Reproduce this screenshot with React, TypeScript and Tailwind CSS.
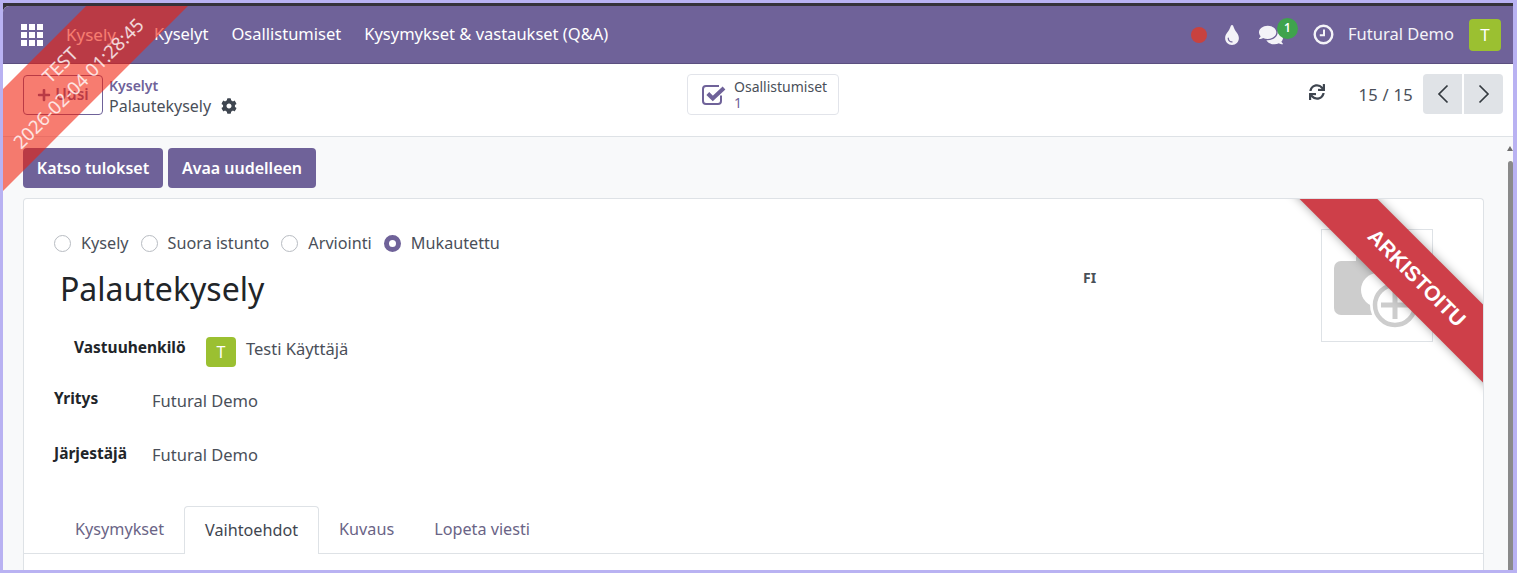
import { FaCog, FaComments, FaPlus, FaSync, FaTint } from 'react-icons/fa';

const navLinks = ['Kyselyt', 'Osallistumiset', 'Kysymykset & vastaukset (Q&A)'];
const radios = [
  { label: 'Kysely', checked: false },
  { label: 'Suora istunto', checked: false },
  { label: 'Arviointi', checked: false },
  { label: 'Mukautettu', checked: true },
];
const tabs = ['Kysymykset', 'Vaihtoehdot', 'Kuvaus', 'Lopeta viesti'];

const AppsIcon = () => (
  <svg width="22" height="22" viewBox="0 0 22 22" fill="white">
    {[0, 8, 16].map((x) =>
      [0, 8, 16].map((y) => <rect key={`${x}-${y}`} x={x} y={y} width="6" height="6" />),
    )}
  </svg>
);

const ClockIcon = () => (
  <svg width="21" height="21" viewBox="0 0 21 21" fill="none" stroke="#f4f3f8">
    <circle cx="10.5" cy="10.5" r="8.8" strokeWidth="2.4" />
    <path d="M11 5.5v5.8H6.8" strokeWidth="2" />
  </svg>
);

const CheckIcon = () => (
  <svg width="24" height="22" viewBox="0 0 24 22" fill="none" stroke="#6f6299">
    <path d="M19 11.5v5.5a3 3 0 0 1-3 3H4a3 3 0 0 1-3-3V5a3 3 0 0 1 3-3h13" strokeWidth="2" />
    <path d="M5.8 9.5l5 5L22 4" strokeWidth="4" />
  </svg>
);

const Chevron = ({ flip }: { flip?: boolean }) => (
  <svg width="12" height="20" viewBox="0 0 12 20" fill="none" stroke="#343a40" strokeWidth="1.7" className={flip ? 'rotate-180' : ''}>
    <path d="M10.5 1.5L2 10l8.5 8.5" />
  </svg>
);

const CameraPlaceholder = () => (
  <svg width="110" height="111" viewBox="0 0 110 111">
    <rect x="12" y="31" width="86" height="54" rx="7" fill="#cdcdcd" />
    <rect x="34" y="24" width="40" height="14" rx="4" fill="#cdcdcd" />
    <circle cx="56" cy="60" r="17" fill="white" />
    <circle cx="73" cy="75" r="25" fill="white" />
    <circle cx="73" cy="75" r="20" fill="none" stroke="#cdcdcd" strokeWidth="4.5" />
    <path d="M73 61v28M59 75h28" stroke="#cdcdcd" strokeWidth="5" />
  </svg>
);

export default function App() {
  return (
    <div className="relative flex h-[573px] w-[1517px] flex-col overflow-hidden border-[3px] border-r-4 border-[#b9b2f2] bg-[#35323a] pt-[3px] font-['Noto_Sans',sans-serif] text-[16.5px] text-[#4a4f59]">
      <div className="relative flex min-h-0 flex-1 flex-col overflow-hidden rounded-tl-[6px] bg-[#f8f9fa]">
        <nav className="flex h-[58px] shrink-0 items-center border-b border-[#5b4f80] bg-[#6f6299] pl-[18px] pr-3 text-white">
          <AppsIcon />
          <span className="ml-[23px] w-[59px] text-[17px] text-white">Kysely</span>
          <div className="ml-[29px] flex gap-[23px]">
            {navLinks.map((link) => (
              <span key={link}>{link}</span>
            ))}
          </div>
          <div className="ml-auto flex items-center">
            <span className="h-4 w-4 rounded-full bg-[#c8423f]" />
            <FaTint className="ml-[15px] text-[20px] text-[#f4f3f8]" />
            <div className="relative ml-[17px]">
              <FaComments className="text-[24px] text-[#f4f3f8]" />
              <span className="absolute -right-[15px] -top-[5px] flex h-[21px] w-[21px] items-center justify-center rounded-full bg-[#3fa34d] text-[12px] font-semibold">1</span>
            </div>
            <div className="ml-[30px]">
              <ClockIcon />
            </div>
            <span className="ml-[14px] text-[#f4f3f8]">Futural Demo</span>
            <span className="ml-[15px] flex h-8 w-8 items-center justify-center rounded-[4px] bg-[#9bc031] text-[17px]">T</span>
          </div>
        </nav>

        <div className="flex h-[73px] shrink-0 items-center border-b border-[#dee2e6] bg-white pb-[11px]">
          <div className="flex w-[684px] items-center pl-5">
            <button className="flex h-10 w-20 items-center justify-center gap-1 rounded-[4px] border border-[#6f6299] text-[15.5px] font-semibold text-[#6f6299]">
              <FaPlus className="text-[14px]" />
              Uusi
            </button>
            <div className="ml-[6px] mt-[2px]">
              <div className="text-sm font-semibold leading-[20px] text-[#6f6299]">Kyselyt</div>
              <div className="flex items-center gap-[10px] text-base leading-[20px]">
                Palautekysely
                <FaCog className="text-[16px] text-[#3f4650]" />
              </div>
            </div>
          </div>
          <button className="flex h-[41px] w-[152px] items-center gap-[8px] rounded-[4px] border border-[#e2e4ea] pl-[14px] text-left text-sm leading-[16px]">
            <CheckIcon />
            <div>
              <div>Osallistumiset</div>
              <div className="text-[#6f6299]">1</div>
            </div>
          </button>
          <div className="flex flex-1 items-center justify-end pr-[10px]">
            <FaSync className="mb-[5px] text-[16px] text-[#3f4650]" />
            <span className="ml-[33px] mt-[2px] tracking-[0.3px]">15 / 15</span>
            <div className="-mt-[2px] ml-[10px] flex gap-[2px] overflow-hidden rounded-[4px]">
              <span className="flex h-10 w-[39px] items-center justify-center bg-[#e0e3e7]">
                <Chevron />
              </span>
              <span className="flex h-10 w-[39px] items-center justify-center bg-[#e0e3e7]">
                <Chevron flip />
              </span>
            </div>
          </div>
        </div>

        <div className="relative min-h-0 flex-1 pl-5 pr-[29px] pt-[11px]">
          <div className="flex gap-[5px]">
            <button className="flex h-[40px] w-[140px] items-center justify-center rounded-[4px] bg-[#6f6299] text-base font-semibold text-white">Katso tulokset</button>
            <button className="flex h-[40px] w-[148px] items-center justify-center rounded-[4px] bg-[#6f6299] text-base font-semibold text-white">Avaa uudelleen</button>
          </div>

          <section className="relative mt-[10px] h-[400px] overflow-hidden rounded-t-[4px] border border-b-0 border-[#dee2e6] bg-white">
            <div className="flex">
              <div className="flex-1 pl-[30px]">
                <div className="mt-[33px] flex items-center text-[16.2px] leading-[22px]">
                  {radios.map((radio) => (
                    <span key={radio.label} className="mr-[12px] flex items-center gap-[10px]">
                      <span className={radio.checked ? 'h-[17px] w-[17px] rounded-full border-[5px] border-[#6f6299] bg-white' : 'h-[17px] w-[17px] rounded-full border border-[#b8bcc2] bg-white'} />
                      {radio.label}
                    </span>
                  ))}
                </div>
                <div className="mt-[11px] flex items-start">
                  <h1 className="ml-[6px] w-[1023px] text-[32px] leading-[48px] text-[#212529]">Palautekysely</h1>
                  <span className="mt-[3px] text-sm font-bold text-[#495057]">FI</span>
                </div>
                <div className="mt-[24px] flex items-center pl-5">
                  <span className="-mt-[8px] w-[132px] text-[15.5px] font-bold text-[#212529]">Vastuuhenkilö</span>
                  <span className="flex h-[30px] w-[30px] items-center justify-center rounded-[4px] bg-[#9bc031] text-base text-white">T</span>
                  <span className="-mt-[5px] ml-[10px]">Testi Käyttäjä</span>
                </div>
                <div className="mt-[22px] flex items-center">
                  <span className="-mt-[6px] w-[98px] text-[15.5px] font-bold text-[#212529]">Yritys</span>
                  <span>Futural Demo</span>
                </div>
                <div className="mt-[29px] flex items-center">
                  <span className="-mt-[4px] w-[98px] text-[15.5px] font-bold text-[#212529]">Järjestäjä</span>
                  <span>Futural Demo</span>
                </div>
              </div>
              <div className="mr-[50px] mt-[30px] h-[113px] w-[112px] overflow-hidden border border-[#dee2e6]">
                <CameraPlaceholder />
              </div>
            </div>

            <div className="mt-[38px] flex h-[48px] items-end border-b border-[#dee2e6] pl-[31px] text-[16.2px]">
              {tabs.map((tab) => (
                <span
                  key={tab}
                  className={
                    tab === 'Vaihtoehdot'
                      ? '-mb-px flex h-[48px] items-center rounded-t-[4px] border border-b-0 border-[#dee2e6] bg-white px-5 text-[#3f4650]'
                      : 'flex h-[47px] items-center px-5 text-[#6a6486]'
                  }
                >
                  {tab}
                </span>
              ))}
            </div>

            <div className="absolute -right-[84px] top-[51px] flex h-[55px] w-[300px] rotate-45 items-center justify-center bg-[#ce3f49] font-['Liberation_Sans',sans-serif] text-[21px] font-bold text-white shadow-[0_0_10px_rgba(0,0,0,0.35)]">
              ARKISTOITU
            </div>
          </section>

          <div className="absolute right-0 top-[24px] h-[500px] w-[5px] rounded-t-[3px] bg-[#8a8a8a]" />
          <div className="absolute right-0 top-[9px] h-0 w-0 border-x-[3px] border-b-[5px] border-x-transparent border-b-[#6e6e6e]" />
        </div>

        <div className="pointer-events-none absolute -left-[84px] top-[32px] flex h-[72px] w-[300px] -rotate-45 flex-col items-center justify-center bg-[rgba(242,29,9,0.58)] text-[18.5px] leading-[26px] text-white/80">
          <span>TEST</span>
          <span>2026-02-04 01:28:45</span>
        </div>
      </div>
    </div>
  );
}
